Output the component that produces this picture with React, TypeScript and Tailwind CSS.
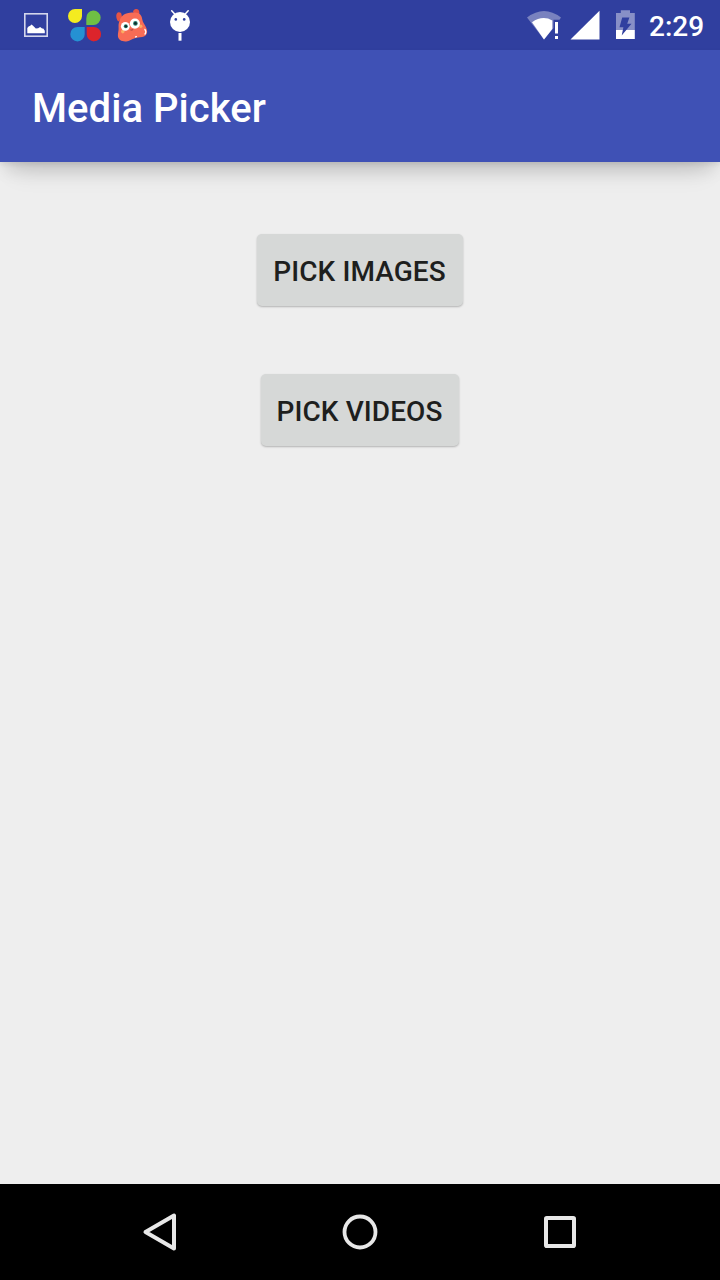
import type { ReactNode } from "react";

function StatusIcon({ x, width, children }: { x: number; width: number; children: ReactNode }) {
  return (
    <svg width={width} height={50} viewBox={`${x} 0 ${width} 50`} className="block shrink-0">
      {children}
    </svg>
  );
}

function StatusBar() {
  return (
    <div className="flex h-[50px] shrink-0 items-center bg-[#303f9f] pl-3">
      <StatusIcon x={12} width={48}>
        <rect x="24.8" y="13.8" width="22.4" height="22.4" fill="none" stroke="#d3d6ec" strokeWidth="1.6" />
        <path d="M27.3 33.2V28q1-1.8 3-2.2l1-1.3 1.5.9 3 3.1 2.3-.3 2-1.1 2 1.5h1.2l1.5 2.2v2.4Z" fill="#fff" />
      </StatusIcon>
      <StatusIcon x={60} width={48}>
        <path d="M75 9h7v7.2a7 7 0 1 1-7-7.2Z" fill="#f4eb20" />
        <path d="M86.3 25v-6.6a7.2 7.2 0 1 1 7.2 6.6Z" fill="#6fbf44" />
        <path d="M84.7 27v7.2a7.2 7.2 0 1 1-7.2-7.2Z" fill="#2591d3" />
        <path d="M86.7 27h6.6a7.2 7.2 0 1 1-6.6 7.2Z" fill="#dc242b" />
      </StatusIcon>
      <StatusIcon x={108} width={48}>
        <path d="M118.2 21.5C115.4 18 115.8 12.4 118.8 12.3c2 0 2.8 1.2 2.8 2.8l.6 3.4ZM133.2 12.4c-.8-2.6 3.4-4.8 5.2-2.6 1.2 1.6 1.2 3.6.4 5.4-1.4-.6-2.6-2-5.6-2.8Z" fill="#e65444" />
        <path d="M119 22.4c1-4.4 3.4-8 7.4-9 2.8-.7 4.4-.6 6.8-.8 3.6-.4 6.8.4 8.1 3.4 1.1 2.6.9 4.7 2.4 7.3 2 3 3.6 5.8 3.4 8.6-.3 2.8-2.2 4.8-5 5.1-2.8.3-5 .5-7.3 1.2-2.8.9-5.4 2.9-8.6 3.2-4.4.3-8.1-1.6-8.3-5.4-.1-3.2.8-4.8.7-7.4 0-2.5-.3-4.1.4-6.2Z" fill="#f86c56" />
        <circle cx="122.8" cy="31.6" r="1.8" fill="#faac63" />
        <circle cx="140.6" cy="26.3" r="1.8" fill="#faac63" />
        <circle cx="125.3" cy="26.3" r="4.4" fill="#fff" />
        <circle cx="134.9" cy="23.6" r="5.1" fill="#fff" />
        <circle cx="125.8" cy="26.2" r="2" fill="#227f70" />
        <circle cx="135.4" cy="23.4" r="2.3" fill="#227f70" />
        <circle cx="125.9" cy="26.2" r="1.2" fill="#142b2b" />
        <circle cx="135.4" cy="23.4" r="1.4" fill="#142b2b" />
        <path d="M130.4 29.9q1.7.5 2.8-.4" fill="none" stroke="#8e3838" strokeWidth=".8" />
        <path d="M144.9 29.4q1.8 2.6.1 4.6M135.6 36.8l.8-.2" fill="none" stroke="#fff" strokeWidth="1.3" strokeLinecap="round" />
      </StatusIcon>
      <StatusIcon x={156} width={48}>
        <path d="m171.7 10.8 3 3.3M188.2 10.8l-3 3.3" stroke="#fff" strokeWidth="1.5" strokeLinecap="round" />
        <circle cx="180" cy="22" r="10" fill="#fff" />
        <circle cx="175.8" cy="19.4" r="1.3" fill="#303f9f" />
        <circle cx="184.2" cy="19.4" r="1.3" fill="#303f9f" />
        <path d="M178.5 33h3v7.7h-3Z" fill="#fff" />
      </StatusIcon>
      <div className="ml-auto flex items-center pr-4">
        <StatusIcon x={524} width={40}>
          <path d="M527 17.5Q544 4.5 561 17.5L559.5 19.8H553.5V28L544 39.5Z" fill="#7982bf" />
          <path d="M532 22.3Q542.5 14.9 552.3 20.5V29L544 39.5Z" fill="#fff" />
          <path d="M555 22h3v11.5h-3ZM555 36h3v3h-3Z" fill="#fff" />
        </StatusIcon>
        <StatusIcon x={564} width={40}>
          <path d="M599.5 10.8v28.7h-29Z" fill="#fff" />
        </StatusIcon>
        <StatusIcon x={604} width={45}>
          <path d="M616 13h4.8v-2.8h9.2V13h4.8v17H616Z" fill="#8890c7" />
          <path d="M616 30h18.8v9H616Z" fill="#fff" />
          <path d="M622.2 17.5h7.2l-2.2 6.2h4.3l-9.8 11.8 1.7-8.2h-3.9Z" fill="#303f9f" />
        </StatusIcon>
        <span className="w-[55px] whitespace-nowrap pt-[3px] text-[28px] font-medium leading-8 text-white">2:29</span>
      </div>
    </div>
  );
}

function PickButton({ label, width }: { label: string; width: string }) {
  return (
    <button
      className={`${width} h-[72px] whitespace-nowrap rounded-[5px] bg-[#d6d8d7] pt-[3px] text-center text-[28px] font-medium leading-8 tracking-[0.08px] text-[#1e1f1e] shadow-[0_1px_2px_rgba(0,0,0,0.25)]`}
    >
      {label}
    </button>
  );
}

function NavigationBar() {
  return (
    <nav className="flex h-24 shrink-0 items-center justify-center gap-[152px] bg-black">
      <button aria-label="Back">
        <svg width="48" height="48" viewBox="0 0 48 48" fill="none" stroke="#e8e8e8" strokeWidth="4" strokeLinejoin="round" className="block">
          <path d="M38 7.6v32.8L9.5 24Z" />
        </svg>
      </button>
      <button aria-label="Home">
        <svg width="48" height="48" viewBox="0 0 48 48" fill="none" stroke="#e8e8e8" strokeWidth="3.8" className="block">
          <circle cx="24" cy="24" r="15.5" />
        </svg>
      </button>
      <button aria-label="Recent apps">
        <svg width="48" height="48" viewBox="0 0 48 48" fill="none" stroke="#e8e8e8" strokeWidth="4" strokeLinejoin="round" className="block">
          <rect x="10" y="10" width="28" height="28" rx="0.8" />
        </svg>
      </button>
    </nav>
  );
}

export default function App() {
  return (
    <div className="flex h-[1280px] w-[720px] flex-col overflow-hidden bg-[#eeeeee] font-['Roboto',sans-serif]">
      <StatusBar />
      <header className="flex h-28 shrink-0 items-center bg-[#3f51b5] pl-8 pt-1.5 shadow-[0_2px_5px_rgba(0,0,0,0.08),0_12px_16px_-4px_rgba(0,0,0,0.1),0_22px_24px_-14px_rgba(0,0,0,0.12)]">
        <h1 className="whitespace-nowrap text-[40px] font-medium leading-[48px] tracking-[0.06px] text-white">Media Picker</h1>
      </header>
      <main className="flex flex-1 flex-col items-center gap-[68px] pr-px pt-[72px]">
        <PickButton label="PICK IMAGES" width="w-[206px]" />
        <PickButton label="PICK VIDEOS" width="w-[198px]" />
      </main>
      <NavigationBar />
    </div>
  );
}
